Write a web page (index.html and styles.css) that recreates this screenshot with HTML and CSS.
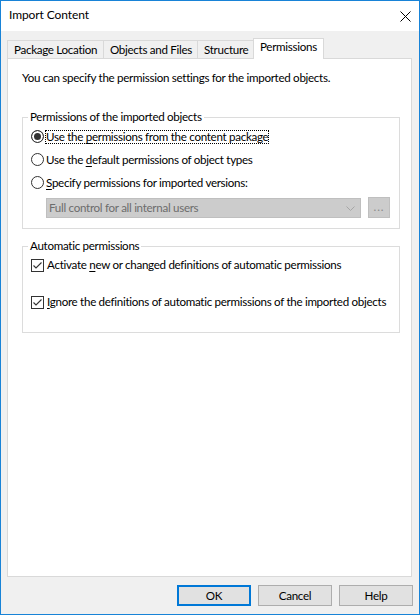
FILE: index.html
```html
<!DOCTYPE html>
<html>
<head>
<meta charset="utf-8">
<title>Import Content</title>
<link rel="stylesheet" href="styles.css">
</head>
<body>
<div class="window">
  <div class="titlebar">
    <span class="title">Import Content</span>
    <svg class="close" width="11" height="11" viewBox="0 0 11 11"><path d="M0.5 0.5L10.5 10.5M10.5 0.5L0.5 10.5" stroke="#000" stroke-width="1" fill="none"/></svg>
  </div>
  <div class="tabs">
    <div class="tab tab-1">Package Location</div>
    <div class="tab tab-2">Objects and Files</div>
    <div class="tab tab-3">Structure</div>
    <div class="tab tab-4 active">Permissions</div>
  </div>
  <div class="panel">
    <p class="intro">You can specify the permission settings for the imported objects.</p>
    <fieldset class="group group-perm">
      <legend>Permissions of the imported objects</legend>
      <div class="option"><span class="radio checked"></span><span class="label focus">Use the <u>p</u>ermissions from the content package</span></div>
      <div class="option"><span class="radio"></span><span class="label">Use the <u>d</u>efault permissions of object types</span></div>
      <div class="option"><span class="radio"></span><span class="label"><u>S</u>pecify permissions for imported versions:</span></div>
      <div class="select-row">
        <div class="select"><span>Full control for all internal users</span>
          <svg class="chevron" width="9" height="5" viewBox="0 0 9 5"><path d="M0.5 0.5L4.5 4.5L8.5 0.5" stroke="#a6a6a6" stroke-width="1" fill="none"/></svg>
        </div>
        <div class="more">...</div>
      </div>
    </fieldset>
    <fieldset class="group group-auto">
      <legend>Automatic permissions</legend>
      <div class="option check-row"><span class="checkbox"><svg width="11" height="11" viewBox="0 0 11 11"><path d="M1.5 5.5L4 8L9.5 2.5" stroke="#333" stroke-width="1.1" fill="none"/></svg></span><span class="label">Activate <u>n</u>ew or changed definitions of automatic permissions</span></div>
      <div class="option check-row second"><span class="checkbox"><svg width="11" height="11" viewBox="0 0 11 11"><path d="M1.5 5.5L4 8L9.5 2.5" stroke="#333" stroke-width="1.1" fill="none"/></svg></span><span class="label"><u>I</u>gnore the definitions of automatic permissions of the imported objects</span></div>
    </fieldset>
  </div>
  <div class="buttons">
    <div class="btn default">OK</div>
    <div class="btn">Cancel</div>
    <div class="btn">Help</div>
  </div>
</div>
</body>
</html>
```
FILE: styles.css
```css
html, body {
  margin: 0;
  padding: 0;
  background: #ffffff;
}
body {
  font-family: "Segoe UI", Lato, "Liberation Sans", sans-serif;
  font-size: 11.6px;
  letter-spacing: -0.3px;
  color: #000;
}
.window {
  width: 420px;
  height: 615px;
  box-sizing: border-box;
  border: 1px solid #1883d7;
  background: #f0f0f0;
  display: flex;
  flex-direction: column;
}
.titlebar {
  height: 30px;
  flex: none;
  background: #fff;
  display: flex;
  align-items: center;
  justify-content: space-between;
  padding: 0 8px 0 8px;
}
.title {
  font-size: 12px;
  letter-spacing: -0.1px;
  line-height: 16px;
  margin-top: -2px;
}
.close {
  display: block;
}
.tabs {
  display: flex;
  align-items: flex-end;
  height: 20px;
  margin: 7px 0 0 6px;
  flex: none;
}
.tab {
  box-sizing: border-box;
  height: 18px;
  border: 1px solid #d9d9d9;
  border-bottom: none;
  background: #f0f0f0;
  padding: 0 0 0 6px;
  line-height: 18px;
  white-space: nowrap;
  margin-right: -1px;
}
.tab-1 { width: 97px; }
.tab-2 { width: 95px; }
.tab-3 { width: 57px; }
.tab-4 { width: 71px; }
.tab.active {
  height: 21px;
  margin-bottom: -1px;
  background: #fff;
  line-height: 16px;
  position: relative;
  z-index: 1;
}
.panel {
  flex: none;
  width: 405px;
  height: 519px;
  box-sizing: border-box;
  margin-left: 6px;
  border: 1px solid #d9d9d9;
  background: #fff;
  padding: 11px 0 0 14px;
}
.intro {
  margin: 0;
  line-height: 16px;
}
.group {
  width: 378px;
  box-sizing: border-box;
  margin: 0;
  border: 1px solid #dcdcdc;
  padding: 0;
  min-inline-size: 0;
}
.group legend {
  margin-left: 5px;
  padding: 0 2px;
  line-height: 16px;
}
.group-perm {
  margin-top: 23px;
  padding-bottom: 10px;
}
.group-auto {
  margin-top: 9px;
  padding-bottom: 19px;
}
.option {
  display: flex;
  align-items: center;
  height: 23px;
  padding-left: 8px;
  white-space: nowrap;
}
.label {
  line-height: 16px;
}
.label u {
  text-decoration-thickness: 1px;
  text-underline-offset: 2px;
}
.focus {
  display: inline-block;
  line-height: 12px;
  height: 12px;
  outline: 1px dotted #000;
  outline-offset: 0;
}
.radio {
  width: 13px;
  height: 13px;
  box-sizing: border-box;
  border: 1px solid #333;
  border-radius: 50%;
  background: #fff;
  margin-right: 2px;
  flex: none;
}
.radio.checked {
  background: #333;
  box-shadow: inset 0 0 0 2px #fff;
}
.select-row {
  display: flex;
  align-items: flex-end;
  gap: 7px;
  padding-left: 23px;
  margin-top: 3px;
}
.select {
  width: 315px;
  height: 20px;
  box-sizing: border-box;
  border: 1px solid #bfbfbf;
  background: #cccccc;
  color: #6d6d6d;
  display: flex;
  align-items: center;
  justify-content: space-between;
  padding: 0 5px 0 2px;
  line-height: 16px;
}
.chevron {
  display: block;
}
.more {
  width: 22px;
  height: 21px;
  box-sizing: border-box;
  border: 1px solid #bfbfbf;
  background: #cccccc;
  color: #8a8a8a;
  text-align: center;
  line-height: 17px;
  letter-spacing: 1px;
}
.check-row {
  height: 22px;
}
.check-row.second {
  margin-top: 15px;
}
.checkbox {
  width: 13px;
  height: 13px;
  box-sizing: border-box;
  border: 1px solid #333;
  background: #fff;
  margin-right: 3px;
  flex: none;
  display: flex;
  align-items: center;
  justify-content: center;
}
.checkbox svg {
  display: block;
}
.buttons {
  flex: none;
  display: flex;
  justify-content: flex-end;
  gap: 7px;
  margin-top: 8px;
  padding-right: 6px;
}
.btn {
  width: 74px;
  height: 21px;
  box-sizing: border-box;
  border: 1px solid #adadad;
  background: #e1e1e1;
  text-align: center;
  line-height: 19px;
}
.btn.default {
  border: 2px solid #0078d7;
  line-height: 17px;
}
```
